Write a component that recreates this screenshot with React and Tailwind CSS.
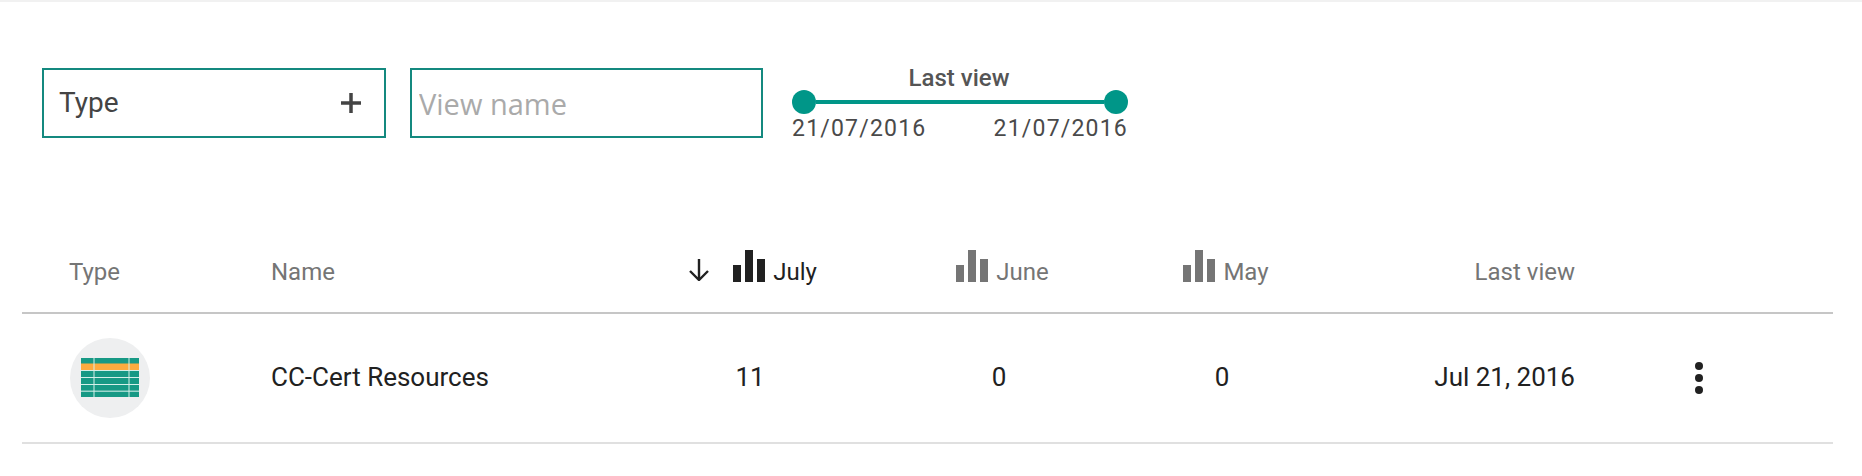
const ROW = "grid grid-cols-[249px_362px_234px_264px_182px_262px_248px_1fr] items-center";

function Bars({ className }) {
  return (
    <svg width="32" height="32" viewBox="0 0 32 32" className={className} fill="currentColor">
      <rect x="0" y="15" width="8" height="17" />
      <rect x="12" y="0" width="8" height="32" />
      <rect x="24" y="9" width="8" height="23" />
    </svg>
  );
}

function TableIcon() {
  return (
    <div className="w-[80px] h-[80px] rounded-full bg-[#eeeff0] flex items-center justify-center">
      <svg width="58" height="39" viewBox="0 0 58 39">
        <rect x="0" y="0" width="58" height="39" fill="#179985" />
        <rect x="0" y="5.5" width="58" height="6.5" fill="#fcab3f" />
        <g fill="#d5efe9">
          <rect x="0" y="12" width="58" height="1" />
          <rect x="0" y="19" width="58" height="1" />
          <rect x="0" y="26" width="58" height="1" />
          <rect x="0" y="32.5" width="58" height="1.5" opacity="0.7" />
          <rect x="12.5" y="0" width="1" height="39" />
          <rect x="47.5" y="0" width="1" height="39" />
        </g>
      </svg>
    </div>
  );
}

export default function App() {
  return (
    <div className="w-[1862px] h-[476px] bg-white border-t-2 border-[#f1f1f1] font-['Roboto',sans-serif] overflow-hidden">
      <div className="flex items-start pl-[42px] pt-[66px] h-[246px]">
        <div className="w-[344px] h-[70px] border-2 border-[#14897f] flex items-center justify-between pl-[15px] pr-[23px] text-[28px] text-[#444]">
          <span>Type</span>
          <svg width="20" height="20" viewBox="0 0 20 20" fill="#444">
            <rect x="8.25" y="0" width="3.5" height="20" />
            <rect x="0" y="8.25" width="20" height="3.5" />
          </svg>
        </div>
        <input
          placeholder="View name"
          className="ml-[24px] w-[353px] h-[70px] border-2 border-[#14897f] pl-[7px] text-[29px] font-['Open_Sans',sans-serif] outline-none placeholder:text-[#aaaaaa]"
        />
        <div className="ml-[29px] w-[336px] flex flex-col text-[#4a4a4a]">
          <div className="text-center text-[24px] font-medium text-[#555] leading-[28px] pr-[2px] -mt-[4px] h-[26px]">Last view</div>
          <div className="flex items-center h-[24px]">
            <div className="w-[24px] h-[24px] rounded-full bg-[#009688]" />
            <div className="flex-1 h-[4px] bg-[#009688]" />
            <div className="w-[24px] h-[24px] rounded-full bg-[#009688]" />
          </div>
          <div className="flex justify-between text-[23px] leading-[30px] tracking-[1.2px]">
            <span>21/07/2016</span>
            <span>21/07/2016</span>
          </div>
        </div>
      </div>

      <div className="mx-[22px] w-[1811px]">
        <div className={`${ROW} h-[66px] pb-[16px] border-b-2 border-[#c6c6c6] text-[24px] text-[#757575]`}>
          <div className="pl-[47px]">Type</div>
          <div>Name</div>
          <div className="flex items-center justify-center gap-[23px] pl-[5px] text-[#212121]">
            <svg width="22" height="22" viewBox="0 0 22 22" fill="none" stroke="currentColor" strokeWidth="2.4" className="-mt-[4px]">
              <path d="M11 0V21M2 12L11 21L20 12" />
            </svg>
            <div className="flex items-center gap-[8px]"><Bars className="-mt-[12px]" /><span>July</span></div>
          </div>
          <div className="flex items-center justify-center gap-[8px] pl-[7px]"><Bars className="-mt-[12px]" /><span>June</span></div>
          <div className="flex items-center justify-center gap-[8px] pl-[8px]"><Bars className="-mt-[12px]" /><span>May</span></div>
          <div className="text-right">Last view</div>
          <div />
        </div>
        <div className={`${ROW} h-[130px] pb-[1px] border-b-2 border-[#e0e0e0] text-[26px] text-[#212121]`}>
          <div className="pl-[48px]"><TableIcon /></div>
          <div>CC-Cert Resources</div>
          <div className="text-center">11</div>
          <div className="text-center">0</div>
          <div className="text-center">0</div>
          <div className="text-right">Jul 21, 2016</div>
          <div className="flex justify-center">
            <svg width="8" height="32" viewBox="0 0 8 32" fill="#212121">
              <circle cx="4" cy="4" r="4" />
              <circle cx="4" cy="16" r="4" />
              <circle cx="4" cy="28" r="4" />
            </svg>
          </div>
          <div />
        </div>
      </div>
    </div>
  );
}
